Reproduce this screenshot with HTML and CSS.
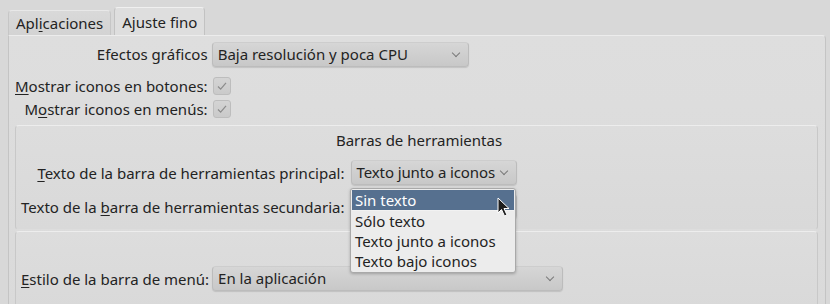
FILE: index.html
```html
<!DOCTYPE html>
<html lang="es">
<head>
    <meta charset="UTF-8">
    <title>Ajuste fino</title>
    <link rel="stylesheet" href="styles.css">
</head>
<body>

<!-- pestañas -->
<div class="tabbar">
    <div class="tab">Apl<u>i</u>caciones</div>
    <div class="tab active">Ajuste fino</div>
</div>

<div class="panel">
    <div class="form top-form">
        <label class="lbl first">Efectos gráficos</label>
        <div class="combo first effects">Baja resolución y poca CPU<span class="arrow"></span></div>

        <label class="lbl"><u>M</u>ostrar iconos en botones:</label>
        <span class="check"><svg viewBox="0 0 18 18"><path d="M4.5 9.5 L7.5 12.5 L13.5 5.5" /></svg></span>

        <label class="lbl">M<u>o</u>strar iconos en menús:</label>
        <span class="check"><svg viewBox="0 0 18 18"><path d="M4.5 9.5 L7.5 12.5 L13.5 5.5" /></svg></span>
    </div>

    <!-- barras de herramientas -->
    <div class="group toolbars">
        <div class="group-title">Barras de herramientas</div>
        <div class="form group-form">
            <label class="lbl"><u>T</u>exto de la barra de herramientas principal:</label>
            <div class="combo toolbar-combo">Texto junto a iconos<span class="arrow"></span></div>

            <label class="lbl">Texto de la <u>b</u>arra de herramientas secundaria:</label>
            <!-- tapado por la lista abierta -->
            <div class="combo toolbar-combo covered"><span class="value">Texto junto a iconos</span><span class="arrow"></span></div>
        </div>
    </div>

    <!-- barra de menú -->
    <div class="group menubar">
        <div class="form menu-form">
            <label class="lbl left"><u>E</u>stilo de la barra de menú:</label>
            <div class="combo menu-combo">En la aplicación<span class="arrow"></span></div>
        </div>
    </div>
</div>

<!-- lista desplegable abierta -->
<ul class="popup">
    <li class="selected">Sin texto</li>
    <li>Sólo texto</li>
    <li>Texto junto a iconos</li>
    <li>Texto bajo iconos</li>
</ul>

<svg class="cursor" viewBox="0 0 14 21" width="14" height="21">
    <path d="M1 1 L1 16 L4.5 12.5 L7.5 19 L10 18 L7 11.5 L12 11.5 Z" />
</svg>

</body>
</html>
```

FILE: styles.css
```css
body {
    font-family: "Noto Sans", "DejaVu Sans", sans-serif;
    font-size: 15px;
    color: #232323;
    background-color: #d8d8d8;
    margin: 0;
    padding: 0;
    width: 830px;
    height: 304px;
    overflow: hidden;
}

u {
    text-decoration-thickness: 1px;
    text-underline-offset: 2px;
}

.tabbar {
    display: flex;
    align-items: flex-end;
    height: 35px;
    padding-left: 8px;
    gap: 3px;
}

.tab {
    height: 24px;
    line-height: 24px;
    padding: 0 7px;
    background: linear-gradient(#d9d9d9, #d3d3d3);
    border: 1px solid #c6c6c6;
    border-top-color: #e8e8e8;
    border-bottom: none;
    border-radius: 4px 4px 0 0;
}

.tab.active {
    height: 27px;
    line-height: 28px;
    background: #dedede;
    border-color: #c2c2c2;
    border-top-color: #f0f0f0;
}

.panel {
    margin: 0 4px 0 8px;
    height: 269px;
    padding: 6px 7px 0 6px;
    background: linear-gradient(#dedede, #dadada);
    border: 1px solid #c4c4c4;
    border-top-color: #ececec;
    border-bottom: none;
    border-radius: 0 4px 0 0;
}

.form {
    display: grid;
    grid-template-columns: max-content max-content;
    column-gap: 6px;
    align-items: center;
}

.lbl {
    text-align: right;
    white-space: nowrap;
}

.lbl.left {
    text-align: left;
}

.top-form {
    column-gap: 4px;
    grid-template-rows: 32px 23px 23px;
}

.top-form .first {
    align-self: start;
}

.top-form .lbl.first {
    line-height: 25px;
}

.combo {
    position: relative;
    height: 25px;
    line-height: 23px;
    padding: 0 22px 0 5px;
    background: linear-gradient(#d6d6d6, #c8c8c8);
    border: 1px solid #bcbcbc;
    border-top-color: #cdcdcd;
    border-radius: 4px;
    box-shadow: 0 1px 1px rgba(0, 0, 0, 0.12);
    white-space: nowrap;
    overflow: hidden;
    box-sizing: border-box;
}

.toolbar-combo {
    width: 166px;
    letter-spacing: -0.1px;
}

.arrow {
    position: absolute;
    right: 9px;
    top: 7px;
    width: 5px;
    height: 5px;
    border-right: 1px solid #7a7a7a;
    border-bottom: 1px solid #7a7a7a;
    transform: rotate(45deg);
}

.effects {
    width: 257px;
}

.check {
    width: 18px;
    height: 18px;
    margin-left: 1px;
    border: 1px solid #bdbdbd;
    border-radius: 3px;
    background: linear-gradient(#d4d4d4, #cacaca);
    box-sizing: border-box;
}

.check svg {
    display: block;
    width: 16px;
    height: 16px;
}

.check path {
    fill: none;
    stroke: #8c8c8c;
    stroke-width: 1.4;
}

.group {
    border: 1px solid #c8c8c8;
    border-top-color: #ededed;
    border-bottom-color: transparent;
    border-radius: 4px;
    background: linear-gradient(#dddddd, #d9d9d9);
}

.toolbars {
    margin-top: 5px;
    height: 105px;
    padding: 4px 0 0 5px;
    box-sizing: border-box;
}

.group-title {
    text-align: center;
    line-height: 20px;
    height: 20px;
    margin-bottom: 10px;
}

.group-form {
    row-gap: 9px;
    grid-template-rows: 25px 25px;
}

.covered .value {
    visibility: hidden;
}

.menubar {
    margin-top: 1px;
    height: 80px;
    padding: 34px 0 0 5px;
    box-sizing: border-box;
}

.menu-form {
    column-gap: 3px;
}

.menu-combo {
    width: 351px;
}

.popup {
    position: absolute;
    left: 350px;
    top: 188px;
    width: 162px;
    margin: 0;
    padding: 1px;
    list-style: none;
    background: #ececec;
    border: 1px solid #a9a9a9;
    border-radius: 3px;
    box-shadow: 0 1px 3px rgba(0, 0, 0, 0.25);
}

.popup li {
    height: 20px;
    line-height: 20px;
    padding-left: 3px;
}

.popup li.selected {
    background: #56708f;
    color: #ffffff;
    border-bottom: 1px solid #f2f2f2;
}

.cursor {
    position: absolute;
    left: 497px;
    top: 197px;
}

.cursor path {
    fill: #1e1e1e;
    stroke: #ffffff;
    stroke-width: 1;
    stroke-linejoin: round;
}
```
